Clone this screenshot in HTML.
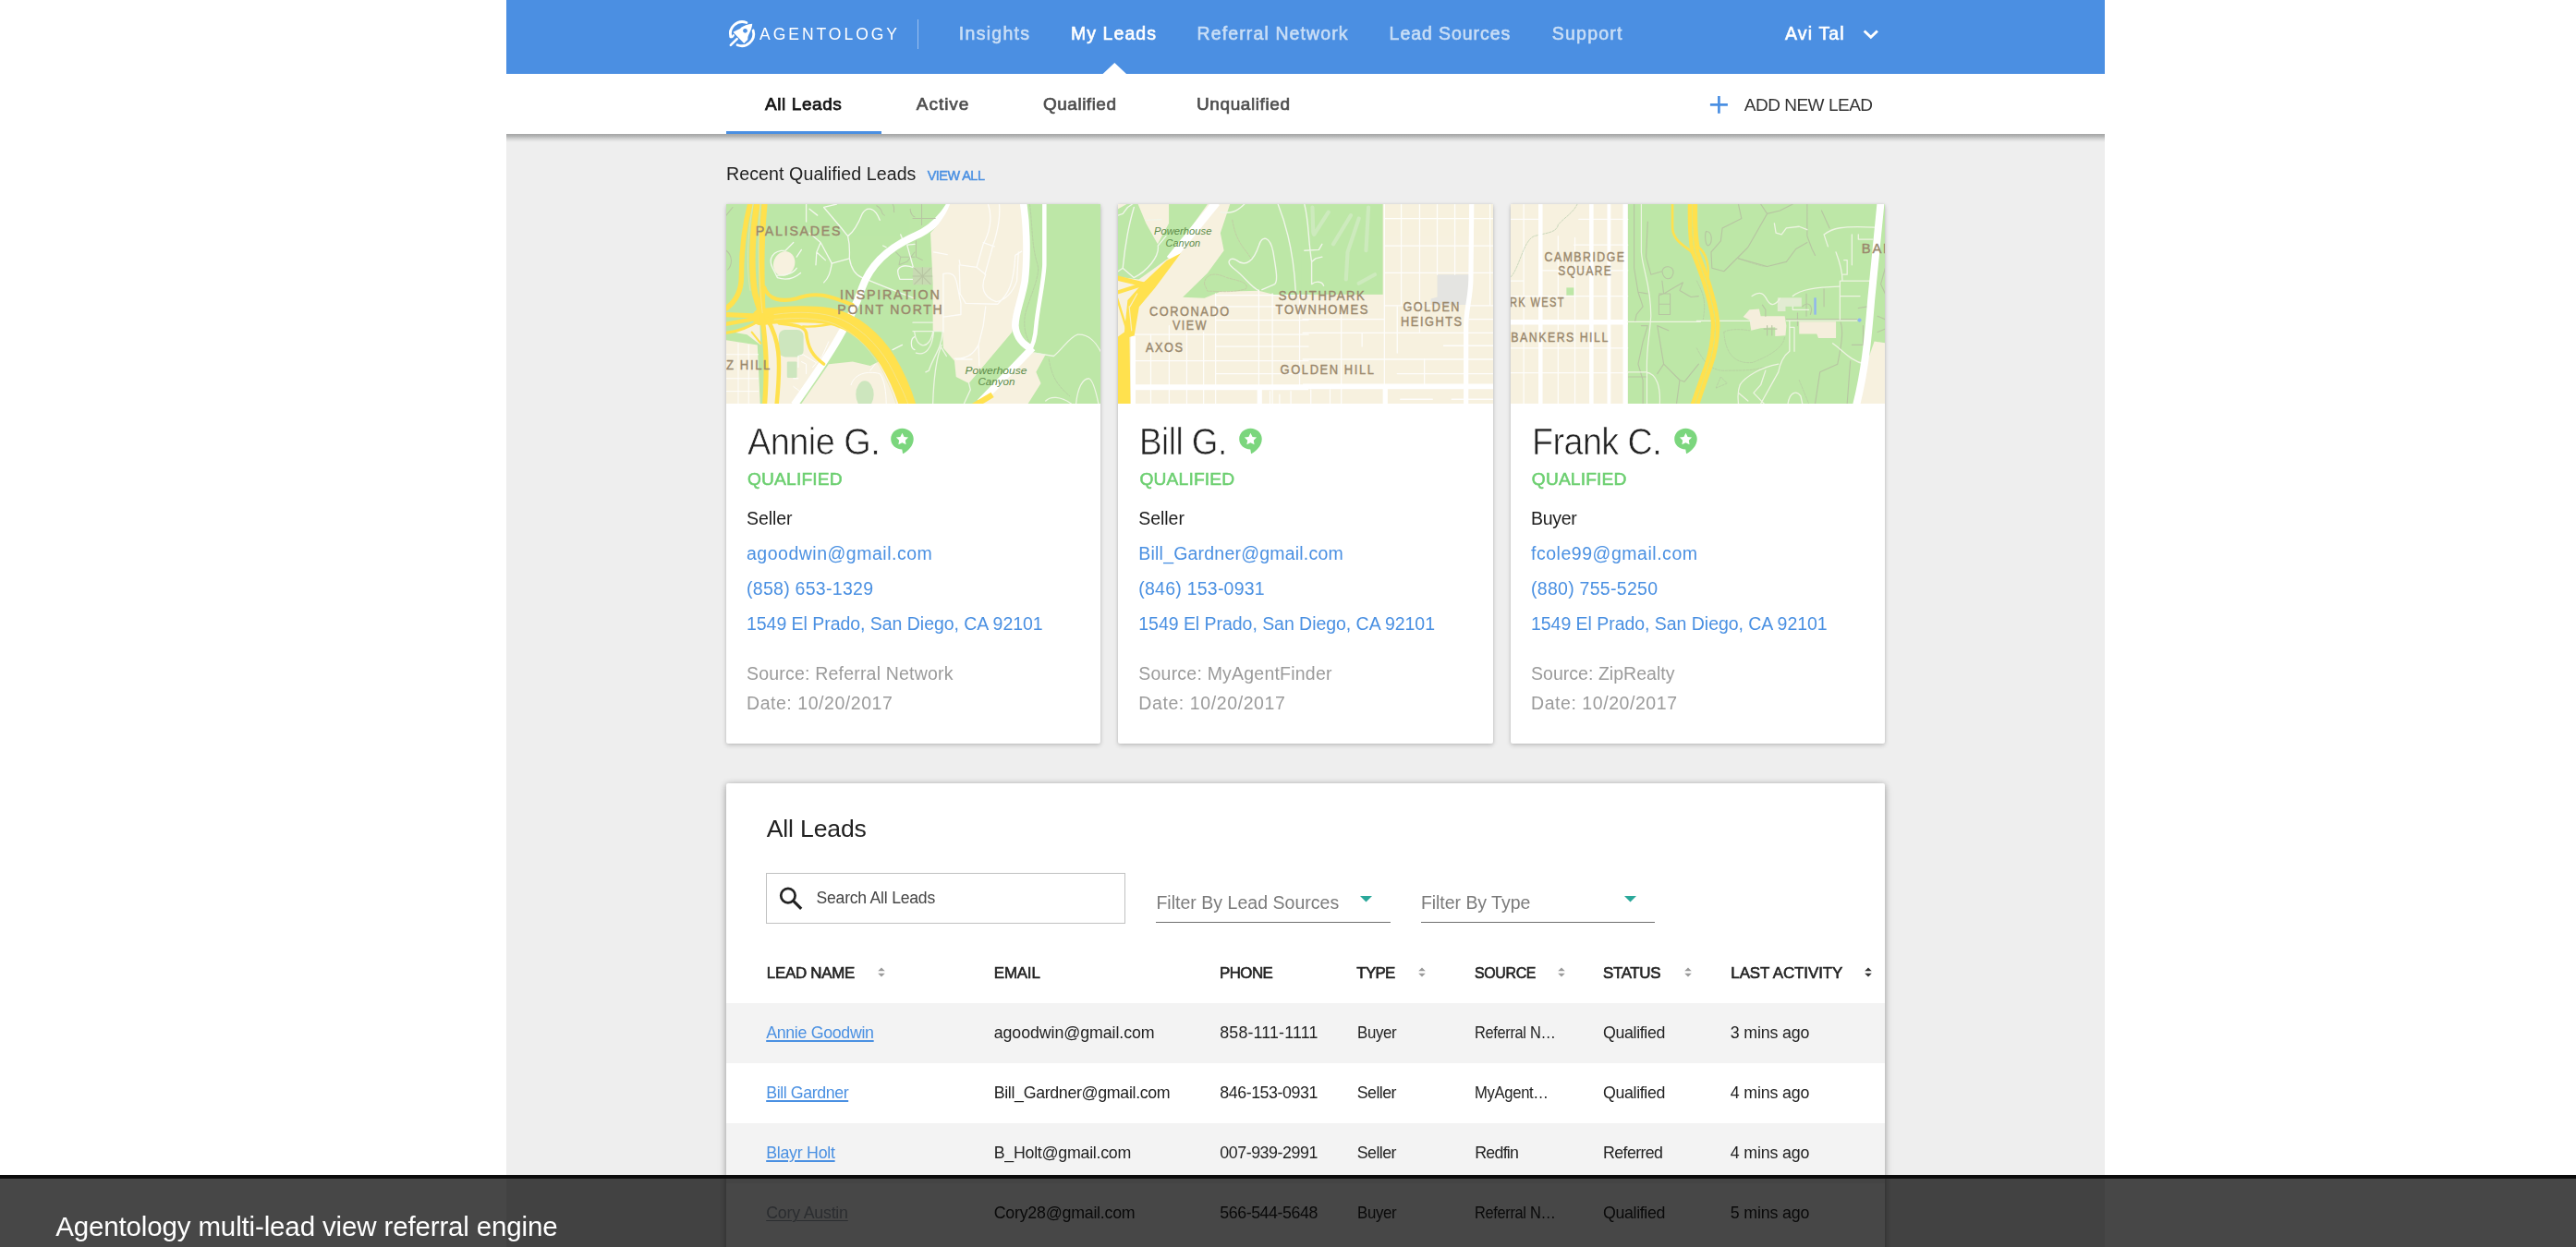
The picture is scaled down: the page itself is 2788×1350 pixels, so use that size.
<!DOCTYPE html>
<html lang="en">
<head>
<meta charset="utf-8">
<title>Agentology – My Leads</title>
<style>
*{box-sizing:border-box;margin:0;padding:0}
html,body{width:2788px;height:1350px;overflow:hidden;background:#fff}
body{position:relative;font-family:"Liberation Sans",sans-serif;color:#212121}
.abs{position:absolute}
.t{position:absolute;white-space:pre;line-height:1;font-family:"Liberation Sans",sans-serif}
#page{position:absolute;left:548px;top:0;width:1730px;height:1350px;background:#eee}
#header{position:absolute;left:548px;top:0;width:1730px;height:80.5px;background:#4b8fe2}
#subnav{position:absolute;left:548px;top:80px;width:1730px;height:65px;background:#fff;}
#subshadow{position:absolute;left:548px;top:145px;width:1730px;height:8.5px;background:linear-gradient(#a4a5a5,#b4b5b5 28%,#cdcece 52%,#e2e2e2 78%,#eee)}
#tabline{position:absolute;left:786px;top:142px;width:167.5px;height:3px;background:#4a8fe2}
.card{position:absolute;top:221px;width:405.4px;height:583.5px;background:#fff;border-radius:0 0 2px 2px;box-shadow:0 2px 5px rgba(0,0,0,.18),0 0 3px rgba(0,0,0,.09);overflow:hidden}
.card svg.map{position:absolute;left:0;top:0;width:405.4px;height:216.3px;display:block}
#tablecard{position:absolute;left:786px;top:848px;width:1254px;height:520px;background:#fff;border-radius:2px;box-shadow:0 1px 6px rgba(0,0,0,.3),0 3px 12px rgba(0,0,0,.1)}
.row{position:absolute;left:786px;width:1254px;height:65px;background:#f3f3f3}
#search{position:absolute;left:828.8px;top:945.2px;width:389.6px;height:54.4px;border:1.6px solid #c0c1c1;background:#fff}
.uline{position:absolute;top:997.8px;height:1.6px;background:#6f6f6f}
#overlay{position:absolute;left:0;top:1272px;width:2788px;height:78px;background:rgba(0,0,0,.72);border-top:4px solid #0b0b0b}
</style>
</head>
<body>
<div id="page"></div>

<!-- ===== top navigation ===== -->
<header id="header"></header>
<svg class="abs" style="left:780px;top:15px" width="50" height="45" viewBox="0 0 1386 1247">
  <g fill="none" stroke="#fff" stroke-width="78" stroke-linecap="round">
    <path d="M775 262 A360 360 0 0 0 300 690"/>
    <path d="M975 500 A360 360 0 0 1 500 935"/>
    <path d="M300 690 Q340 720 385 640" stroke-width="60"/>
    <path d="M490 750 L300 940" stroke-width="72"/>
  </g>
  <path d="M948 298 C800 305 690 360 612 412 L585 445 Q480 490 372 548 L700 888 L810 778 Q800 700 838 628 Q945 430 948 298Z" fill="#fff"/>
  <circle cx="735" cy="508" r="66" fill="#4a8fe2"/>
</svg>
<div class="abs" style="left:992.5px;top:21px;width:1.5px;height:32px;background:rgba(255,255,255,.45)"></div>
<svg class="abs" style="left:1193px;top:68.4px" width="27" height="12.4" viewBox="0 0 27 12.4"><path d="M0 12.4 L13.3 0 L26.6 12.4Z" fill="#fff"/></svg>
<svg class="abs" style="left:2013.5px;top:29px" width="22" height="16" viewBox="0 0 22 16"><path d="M3.7 4.5 L10.8 11.3 L17.9 4.5" fill="none" stroke="#fff" stroke-width="2.9"/></svg>

<!-- ===== sub navigation ===== -->
<nav id="subnav"></nav>
<div id="subshadow"></div>
<div id="tabline"></div>
<svg class="abs" style="left:1850px;top:102.5px" width="21" height="21" viewBox="0 0 21 21"><path d="M10.4 0.9 V19.7 M0.9 10.3 H19.9" stroke="#4a8fe2" stroke-width="2.7" fill="none"/></svg>

<!-- ===== recent qualified lead cards ===== -->
<section class="card" style="left:786px"><svg class="map" viewBox="0 0 405.4 216.3" preserveAspectRatio="none">
<rect width="406" height="217" fill="#bde7a7"/>
<!-- left half, traced at 5.7745x -->
<g transform="scale(0.173175)" fill="none" stroke-linecap="round" stroke-linejoin="round">
  <g fill="#f7f1df" stroke="none">
    <ellipse cx="362" cy="372" rx="66" ry="78" transform="rotate(20 362 372)"/>
    <path d="M0 850 L195 880 L212 1247 L0 1247Z"/>
    <path d="M225 715 L480 735 L700 695 L760 760 L610 1000 L450 1247 L245 1247 L250 900Z"/>
    <path d="M40 800 L210 740 L215 880 L130 815Z"/>
    <path d="M640 1000 L790 985 L900 1010 L1000 960 L1100 1247 L470 1247Z"/>
  </g>
  <g fill="#cde6be" stroke="none">
    <rect x="328" y="785" width="155" height="170" rx="40"/>
    <rect x="380" y="985" width="62" height="100" rx="6"/>
    <ellipse cx="866" cy="1190" rx="56" ry="85"/>
  </g>
  <g stroke="#b7c5a2" stroke-width="6">
    <path d="M0 70 L40 20 M0 290 C40 320 40 380 10 410 M940 10 C990 40 960 60 990 70 M1040 0 C1060 30 1040 40 1050 50 M1150 30 C1150 60 1170 80 1178 80"/>
    <path d="M1060 300 L1090 330 L1080 380 L1130 360 L1178 300 M1090 330 L1178 330" stroke="#b5c9a2"/>
  </g>
  <g stroke="#f4f8ee" stroke-width="7.5">
    <path d="M500 0 L500 110 M520 30 L570 70 M610 20 L690 0 M610 20 L720 150 L760 200 C775 260 770 300 770 340 L660 370 C650 430 640 460 610 490 M760 200 C800 170 830 110 850 60 C880 10 930 20 960 100 M770 340 C780 400 800 440 850 460 L1000 520 L1178 590"/>
    <path d="M560 380 L565 300 L620 350 M565 300 L590 240 L660 370 M590 240 L520 180 M980 260 L1000 270 M1090 190 L1100 215"/>
    <path d="M420 240 L370 290 C290 290 260 340 290 400 L320 460 C380 480 430 460 465 430 M320 445 C370 450 420 430 440 400 M440 330 L470 285"/>
    <path d="M1178 250 L1130 255 L1170 400 M1178 400 C1110 370 1060 390 1075 440 L1085 470 L1178 470 M1178 830 C1150 840 1150 900 1178 910 M1040 910 L1100 880"/>
  </g>
  <g stroke="#fff" stroke-width="5">
    <path d="M75 870 V1247 M140 880 V1247 M0 940 H200 M0 1090 H200 M0 1170 H200"/>
    <path d="M450 950 L480 940 L560 990 M450 950 L450 1020 M470 985 L500 1000 L500 1060 M640 860 L600 950 L540 1020 M420 1140 L460 1170 M420 1090 L450 1090"/>
    <path d="M780 1130 C800 1060 880 1040 960 1060 C990 1100 1000 1180 1000 1247 M900 1040 L930 1000"/>
  </g>
  <!-- arterial -->
  <path d="M1408 -14 C1350 90 1275 160 1178 200 C1010 275 900 380 850 520 C810 640 760 740 700 840 C620 980 520 1120 425 1255" stroke="#fff" stroke-width="46" stroke-linecap="butt"/>
  <!-- freeways -->
  <g stroke="#ffe14e">
    <path d="M150 -5 C110 150 95 300 95 450 C95 550 60 610 -5 655" stroke-width="32"/>
    <path d="M192 -5 C162 200 152 400 180 560 C200 640 215 670 222 690" stroke-width="38"/>
    <path d="M240 -5 C215 250 220 450 228 690" stroke-width="36"/>
    <path d="M225 700 L-5 690" stroke-width="30"/>
    <path d="M225 708 L-5 750" stroke-width="26"/>
    <path d="M225 716 C150 765 80 800 -5 805" stroke-width="18"/>
    <path d="M160 800 L215 870" stroke-width="12"/>
    <path d="M238 520 C260 600 350 612 440 590 C560 545 640 570 790 630" stroke-width="24"/>
    <path d="M215 706 C350 690 500 680 640 700 C800 730 930 850 1010 980 C1070 1080 1110 1180 1135 1262" stroke-width="104"/>
    <path d="M225 700 C240 850 262 950 240 1255" stroke-width="30"/>
    <path d="M258 720 C330 850 345 950 315 1255" stroke-width="26"/>
    <path d="M330 745 C420 755 490 760 500 805 C510 900 540 950 610 1000" stroke-width="20"/>
    <path d="M480 765 C560 770 640 755 720 735" stroke-width="14"/>
  </g>
  <g stroke="#f2e9a6" stroke-width="5" opacity=".75">
    <path d="M300 690 C450 668 600 672 720 720 C870 790 980 920 1045 1050 C1090 1140 1120 1200 1140 1260"/>
    <path d="M300 722 C450 706 580 712 680 750 C820 810 920 930 985 1060 C1025 1150 1050 1200 1065 1260"/>
    <path d="M214 0 C192 250 205 480 226 680"/>
    <path d="M168 0 C130 200 125 400 150 540"/>
  </g>
</g>
<!-- right half -->
<g transform="translate(202 0) scale(0.173175)" fill="none" stroke-linecap="round" stroke-linejoin="round">
  <g fill="#f7f1df" stroke="none">
    <path d="M110 180 C170 120 210 60 232 0 L690 0 L705 300 L695 500 L635 700 L620 800 L350 1120 L270 1080 L260 980 L190 900 L185 800 L125 790 L125 500Z"/>
    <path d="M720 920 L830 940 L770 1050 L800 1120 L720 1247 L420 1247Z"/>
  </g>
  <rect x="0" y="395" width="120" height="108" fill="#c7dab2"/>
  <g stroke="#b7c5a2" stroke-width="6">
    <path d="M55 0 V130 M0 90 H140 M20 230 V330 L60 350 M10 400 L110 500 M110 400 L10 500 M60 395 V500 M0 450 H120"/>
  </g>
  <g stroke="#fff" stroke-width="7.5" opacity=".8">
    <path d="M470 0 C500 80 480 180 440 250 L400 390 M540 0 C550 100 520 200 500 260 L450 440 M440 240 L510 265 M290 350 L295 380 L400 395 L455 440 C420 520 440 580 520 610 M130 300 L215 315"/>
    <path d="M190 435 L190 800 M190 435 C260 420 270 460 280 520 L300 620 L300 690 L190 705 M290 380 L295 560 L330 620 L530 625 C600 560 630 500 640 320 L680 295 M660 300 L650 480 C620 560 580 600 520 610 M455 640 L440 760 L410 880 C380 940 330 970 260 965 M410 880 L415 1010 M270 970 L370 970"/>
  </g>
  <g stroke="#eef5e4" stroke-width="7.5">
    <path d="M0 740 L125 740 M0 795 L180 795 M10 800 C20 900 100 920 125 800 M20 930 C80 950 120 900 130 800 M185 800 C180 900 130 950 100 1040 L80 1050 M180 900 L210 950 M180 880 C150 950 130 1100 125 1247 M350 1120 L360 1160 L320 1247"/>
    <path d="M760 930 L880 950 C940 900 980 830 1030 815 C1100 810 1150 870 1178 930 M830 1230 C860 1200 920 1200 990 1247 M1020 1247 C1030 1150 1060 1090 1100 1090 C1130 1100 1150 1200 1160 1247"/>
  </g>
  <g stroke="#b3c39f" stroke-width="3.5" stroke-dasharray="16 8">
    <path d="M730 0 C750 150 740 250 780 380 C800 450 720 600 700 700 C690 780 710 830 730 870"/>
    <path d="M850 970 C870 1080 900 1130 980 1200"/>
  </g>
  <g stroke="#fff" stroke-linecap="butt">
    <path d="M690 -10 C715 150 715 350 700 480 C680 600 640 680 640 760 C645 830 690 880 745 905" stroke-width="44"/>
    <path d="M822 -10 L822 380 C815 500 780 650 770 760 C765 840 750 890 722 925" stroke-width="26"/>
    <path d="M748 898 L420 1238" stroke-width="44"/>
  </g>
  <path d="M497 1192 L380 1262" stroke="#ffe14e" stroke-width="36" stroke-linecap="butt"/>
</g>
<g font-family="Liberation Sans, sans-serif" font-weight="400" fill="#9a886c" stroke="#9a886c" stroke-width=".4" font-size="13.9" letter-spacing="1.7">
  <text x="31.7" y="34.1" textLength="93.6" lengthAdjust="spacingAndGlyphs">PALISADES</text>
  <text x="122.9" y="103.4" textLength="109.6" lengthAdjust="spacingAndGlyphs">INSPIRATION</text>
  <text x="120.3" y="118.8" textLength="115.2" lengthAdjust="spacingAndGlyphs">POINT NORTH</text>
  <text x="0" y="179.5" textLength="49" lengthAdjust="spacingAndGlyphs">Z HILL</text>
</g>
<g font-family="Liberation Sans, sans-serif" font-style="italic" fill="#5d8c4a" font-size="11.6" text-anchor="middle">
  <text x="292" y="183.6" textLength="67" lengthAdjust="spacingAndGlyphs">Powerhouse</text>
  <text x="292.5" y="196.2" textLength="40" lengthAdjust="spacingAndGlyphs">Canyon</text>
</g>
</svg>
</section>
<section class="card" style="left:1210.2px"><svg class="map" viewBox="0 0 405.4 216.3" preserveAspectRatio="none">
<rect width="406" height="217" fill="#f7f1df"/>
<!-- left half -->
<g transform="scale(0.173175)" fill="none" stroke-linecap="round" stroke-linejoin="round">
  <g fill="#bde7a7" stroke="none">
    <path d="M0 0 L560 0 L320 335 L130 470 L0 455Z"/>
    <path d="M700 0 L1190 0 L1190 562 L1000 572 L880 542 L640 547 L540 587 L405 582 L560 430 L662 290 L640 180Z"/>
  </g>
  <path d="M125 0 L318 0 L318 120 L248 250 L175 120Z M0 30 L55 0 L0 0Z" fill="#f7f1df"/>
  <g stroke="#f1f6ea" stroke-width="8">
    <path d="M0 70 L30 60 L60 20 L90 0 M100 20 C60 150 40 300 30 400 L100 460 C180 420 260 330 250 260 L300 200 M30 400 L0 420 M180 100 L270 95"/>
    <path d="M1000 0 C1060 150 1100 350 1110 540 M790 0 C740 50 700 60 640 50 M880 540 C830 520 800 460 720 400 C670 360 700 330 740 350 C800 400 850 350 880 260 C900 190 950 200 970 300 C990 420 1000 480 980 500 L900 535 M1178 20 C1150 60 1178 100 1178 100"/>
  </g>
  <g stroke="#c3bca2" stroke-width="3.5" stroke-dasharray="14 8">
    <path d="M715 100 C740 250 800 280 830 340"/>
    <path d="M540 500 C540 440 600 420 680 460 C760 480 820 490 800 530 C700 560 600 540 560 545Z"/>
  </g>
  <g stroke="#fff" stroke-width="7.5" opacity=".88">
    <path d="M610 570 H1190 M610 640 H1190 M610 725 H1190 M100 815 H1190 M610 890 H1190 M100 980 H1190 M610 1060 H1190"/>
    <path d="M205 815 V1247 M320 760 V1247 M430 800 V1247 M535 800 V1247 M610 560 V1247 M880 540 V1160 M965 560 V1247 M1135 560 V1150 M950 1170 V1247 M1010 1190 V1247 M1080 1170 V1247"/>
  </g>
  <g stroke="#fff" stroke-linecap="butt">
    <path d="M615 -10 L325 345" stroke-width="52"/>
    <path d="M95 825 V1260" stroke-width="30"/>
    <path d="M80 1145 H1190" stroke-width="34"/>
    <path d="M885 1150 V1260" stroke-width="30"/>
  </g>
  <g fill="#ffe14e" stroke="none">
    <path d="M305 352 L392 308 L232 522 L132 642 L102 822 L72 832 L78 1260 L-5 1260 L-5 832 L40 800 L60 600 L150 500Z"/>
  </g>
  <g stroke="#ffe14e">
    <path d="M-5 462 L150 500" stroke-width="30"/>
    <path d="M-5 552 L190 490" stroke-width="24"/>
    <path d="M-5 590 L60 800" stroke-width="14"/>
  </g>
  <g stroke="#f7f1df" stroke-width="7" opacity=".8"><path d="M70 640 L85 790 M120 560 L75 640"/></g>
</g>
<!-- right half -->
<g transform="translate(201.8 0) scale(0.173175)" fill="none" stroke-linecap="round" stroke-linejoin="round">
  <rect x="-20" y="-5" width="510" height="570" fill="#bde7a7"/>
  <g stroke="#cdeabd" stroke-width="24">
    <path d="M150 50 L60 190 M290 70 L180 250 M340 90 L270 300 L260 470 M400 20 L385 290 M440 440 L340 495 M50 20 L55 180"/>
  </g>
  <g stroke="#f1f6ea" stroke-width="8">
    <path d="M0 0 C30 120 20 200 45 360 V500 M0 290 L90 285 L110 250 M45 360 L70 340 L110 330 M45 500 C70 480 110 480 120 510"/>
  </g>
  <path d="M830 440 L1030 440 L1020 630 L790 630 L790 592 L830 580Z" fill="#e4e4e1"/>
  <g stroke="#fff" stroke-width="7.5" opacity=".88">
    <path d="M500 90 H1190 M500 260 H1190 M500 430 H1190 M500 635 H790 M1030 635 H1190 M-10 720 H500 M1030 720 H1190 M-10 805 H1190 M870 885 H1190 M-10 970 H1190 M580 1060 H1190"/>
    <path d="M500 -5 V1160 M605 -5 V630 M720 -5 V800 M830 -5 V440 M940 -5 V440 M1160 -5 V630 M580 640 V930 M750 970 V1140 M230 680 V1247 M360 805 V890 M160 1160 V1247 M40 1160 V1247 M600 1220 H800 M920 1220 H1190"/>
  </g>
  <g stroke="#fff" stroke-linecap="butt">
    <path d="M1045 -10 L1040 480 C1035 600 1010 660 1010 760 V1260" stroke-width="30"/>
    <path d="M-10 1140 H1190" stroke-width="34"/>
    <path d="M505 1130 V1260" stroke-width="30"/>
  </g>
</g>
<g font-family="Liberation Sans, sans-serif" font-weight="400" fill="#9a886c" stroke="#9a886c" stroke-width=".4" font-size="13.9" letter-spacing="1.7">
  <text x="33.9" y="120.8" textLength="87.8" lengthAdjust="spacingAndGlyphs">CORONADO</text>
  <text x="59" y="136.4" textLength="38" lengthAdjust="spacingAndGlyphs">VIEW</text>
  <text x="29.9" y="160" textLength="41.7" lengthAdjust="spacingAndGlyphs">AXOS</text>
  <text x="173.8" y="103.8" textLength="94.6" lengthAdjust="spacingAndGlyphs">SOUTHPARK</text>
  <text x="170.6" y="119.4" textLength="101.4" lengthAdjust="spacingAndGlyphs">TOWNHOMES</text>
  <text x="308.5" y="115.8" textLength="62.5" lengthAdjust="spacingAndGlyphs">GOLDEN</text>
  <text x="306.1" y="131.8" textLength="67.6" lengthAdjust="spacingAndGlyphs">HEIGHTS</text>
  <text x="175.6" y="184.5" textLength="102.9" lengthAdjust="spacingAndGlyphs">GOLDEN HILL</text>
</g>
<g font-family="Liberation Sans, sans-serif" font-style="italic" fill="#5d8c4a" font-size="11.6">
  <text x="39" y="33" textLength="62.5" lengthAdjust="spacingAndGlyphs">Powerhouse</text>
  <text x="51.6" y="45.6" textLength="37.6" lengthAdjust="spacingAndGlyphs">Canyon</text>
</g>
</svg>
</section>
<section class="card" style="left:1634.6px"><svg class="map" viewBox="0 0 405.4 216.3" preserveAspectRatio="none">
<rect width="406" height="217" fill="#bde7a7"/>
<!-- left half -->
<g transform="translate(-0.6 0) scale(0.173175)" fill="none" stroke-linecap="round" stroke-linejoin="round">
  <rect x="-10" y="-10" width="745" height="1270" fill="#f7f1df"/>
  <rect x="352" y="522" width="46" height="48" fill="#bde7a7"/>
  <g stroke="#fff" stroke-width="7.5" opacity=".85">
    <path d="M85 -5 V1260 M300 200 V1260 M405 210 V1260 M0 95 H190 M430 95 H735 M400 255 H735 M190 415 H735 M0 575 H735 M0 900 H735 M0 1055 H735 M0 480 H85"/>
  </g>
  <path d="M420 0 C390 60 330 90 300 130 C290 180 220 180 150 200 C80 230 60 400 0 460" stroke="#a9c5a2" stroke-width="3.5" stroke-dasharray="14 8"/>
  <g stroke="#fff" stroke-linecap="butt">
    <path d="M190 -10 V1260" stroke-width="26"/>
    <path d="M508 -10 V1260" stroke-width="26"/>
    <path d="M618 -10 V1260" stroke-width="22"/>
    <path d="M720 -10 V1260" stroke-width="30"/>
    <path d="M-10 738 H735" stroke-width="32"/>
  </g>
  <g stroke="#b7c5a2" stroke-width="6.5">
    <path d="M775 0 V400 L800 550 L860 560 M800 550 L830 640 L790 690 L780 735 M860 110 L850 330 L880 440 L950 420 C960 380 1020 380 1020 430 C1010 480 960 480 950 420 M950 480 L960 560 L930 570 V690 H1000 V560 H930 M930 625 H1000 M960 560 L1080 490 L1060 540 L1130 580 L1178 575 M820 760 L860 760 L830 860 L800 1000 L830 1100 V1247 M920 760 L990 790 M920 760 L960 1000 L920 1060 M960 1000 L1060 1100 L1090 1110 L1178 1000 M1060 1100 L1040 1247 M740 1080 H850"/>
  </g>
  <g stroke="#eef4e2" stroke-width="7">
    <path d="M820 0 L820 300 C830 420 880 500 880 700 C870 850 850 900 855 1050 V1247 M735 735 H1190 M735 1050 H850 C920 1060 940 1150 935 1247"/>
  </g>
</g>
<!-- right half -->
<g transform="translate(201.4 0) scale(0.173175)" fill="none" stroke-linecap="round" stroke-linejoin="round">
  <path d="M1110 858 L1190 870 L1190 1260 L980 1260 L1060 1000Z" fill="#f7f1df"/>
  <g fill="#f5eedc">
    <path d="M290 705 L330 660 L390 655 L400 700 L550 700 L560 760 L555 822 L490 826 L490 770 L400 775 L340 790 L330 725Z"/>
    <path d="M640 735 L870 735 L870 838 L760 838 L750 812 L640 812Z"/>
  </g>
  <rect x="505" y="585" width="150" height="55" fill="#e2ecd2"/><rect x="505" y="630" width="50" height="40" fill="#e2ecd2"/>
  <rect x="733" y="585" width="14" height="106" fill="#8fb5ef"/><circle cx="1017" cy="725" r="12" fill="#8fb5ef"/>
  <g stroke="#b7c5a2" stroke-width="6.5">
    <path d="M260 0 L280 90 L160 150 L150 230 L90 300 L95 400 L170 420 L320 270 L440 60 L400 0 M440 60 L520 40 L600 0 M690 0 V200 L720 280 L740 320 M690 240 L620 280 L560 360 L440 390 L260 340 M780 40 L830 150 M60 170 C100 170 100 250 70 260 C50 250 50 180 60 170 M900 740 C920 800 900 900 880 1000 L770 1050 L740 1247 M960 980 L940 1247 M1178 400 L1150 500 L1178 560 M1010 650 L1070 640 M1130 700 L1178 720 M1130 800 L1178 780 M560 720 H1000 M630 680 V760 M685 560 V700 M795 530 V640 M1040 760 V880 H970 M410 630 L430 660 V700 M440 760 V820 M470 760 V820 M420 780 H500 M660 640 C700 600 730 640 710 690"/>
  </g>
  <g stroke="#b4c5a0" stroke-width="3.5" stroke-dasharray="14 8">
    <path d="M260 340 C350 370 400 390 440 390 M170 800 C180 950 250 1000 350 990 C450 950 540 900 550 830 M170 800 C200 780 270 780 330 790 M0 900 C50 1000 100 1050 200 1040 C300 1040 350 1040 420 1020 M0 480 C40 560 60 600 40 720 M640 1100 L700 1247 M120 1150 L150 1080 L190 1120Z"/>
  </g>
  <g stroke="#eef4e2" stroke-width="7.5">
    <path d="M0 730 H340 M560 728 H1000"/>
    <path d="M795 190 C850 150 900 135 1110 145 M795 190 L820 265 M900 480 H1090 M895 480 V720 M900 575 H1020 M345 575 C400 540 420 560 440 600 C470 650 500 620 520 590 M600 575 C650 530 750 520 890 515 M870 300 C900 380 910 420 910 475 M920 350 H940 V440 H915 M1010 190 V220 H1100 M485 120 L495 180 L530 190 L560 150 L640 140 L690 160 M970 190 V380 M600 640 V660 H700"/>
    <path d="M580 730 V920 C540 950 520 1000 510 1050 L400 1247 M610 770 V920 M580 770 H610 M850 870 C920 920 960 980 1050 1000 M510 1000 C400 1020 300 1080 270 1130 C250 1180 260 1220 260 1247 M430 1040 L400 1130 L355 1180 L420 1247 M260 1180 L320 1230 M570 1247 C580 1180 620 1160 650 1200 L660 1247"/>
  </g>
  <path d="M1150 -10 C1130 200 1110 400 1090 600 C1070 850 1050 1050 995 1265" stroke="#fff" stroke-width="46" stroke-linecap="butt"/>
  <g stroke="#ffe14e">
    <path d="M-152 -10 V150 C-146 230 -76 260 -42 290 C-20 310 0 330 20 370" stroke-width="15"/>
    <path d="M-43 -10 C-45 120 -43 230 -25 300 C5 380 30 440 51 510 C75 600 103 680 102 760 C100 860 80 950 55 1020 C25 1100 -5 1190 -30 1265" stroke-width="25"/>
    <path d="M-13 -10 C-15 120 -13 230 5 300 C35 380 60 440 81 510 C105 600 133 680 132 760 C130 860 110 950 85 1020 C55 1100 25 1190 0 1265" stroke-width="25"/>
    <path d="M-2 -10 C-4 100 -2 200 12 270 C40 290 70 340 72 420 C72 460 68 480 66 500" stroke-width="14"/>
    <path d="M60 1040 C30 1120 0 1200 -40 1265" stroke-width="16"/>
  </g>
  <path d="M-28 -10 C-30 120 -28 230 -10 300 C20 380 45 440 66 510 C90 600 118 680 117 760 C115 860 95 950 70 1020 C40 1100 10 1190 -15 1265" stroke="#e6e56f" stroke-width="6"/>
</g>
<g font-family="Liberation Sans, sans-serif" font-weight="400" fill="#9a886c" stroke="#9a886c" stroke-width=".4" font-size="13.9" letter-spacing="1.7">
  <text x="36.6" y="61.6" textLength="87.8" lengthAdjust="spacingAndGlyphs">CAMBRIDGE</text>
  <text x="51.3" y="77.1" textLength="58.9" lengthAdjust="spacingAndGlyphs">SQUARE</text>
  <text x="-1" y="110.9" textLength="60" lengthAdjust="spacingAndGlyphs">RK WEST</text>
  <text x="0.3" y="148.7" textLength="106.5" lengthAdjust="spacingAndGlyphs">BANKERS HILL</text>
  <text x="379.8" y="52.9" textLength="45" lengthAdjust="spacingAndGlyphs">BALB</text>
</g>
</svg>
</section>

<svg width="0" height="0" style="position:absolute"><defs>
<symbol id="badge" viewBox="0 0 1247 1247">
  <path d="M595 245 C405 245 255 385 255 560 C255 735 400 870 590 872 L612 1005 C760 930 935 770 935 560 C935 385 785 245 595 245Z" fill="#7bd67d"/>
  <path d="M595 383 L653 496 L778 516 L688 605 L708 730 L595 673 L482 730 L502 605 L412 516 L537 496Z" fill="#fff"/>
</symbol>
<symbol id="sort" viewBox="0 0 8 11"><path d="M0.2 4.3 L4 0.4 L7.8 4.3Z M0.2 6.7 L4 10.6 L7.8 6.7Z"/></symbol>
<symbol id="dd" viewBox="0 0 13 7"><path d="M0 0 H13 L6.5 6.6Z" fill="#2aa89a"/></symbol>
</defs></svg>
<svg class="abs" style="left:955px;top:455px" width="45" height="45"><use href="#badge"/></svg>
<svg class="abs" style="left:1332px;top:455px" width="45" height="45"><use href="#badge"/></svg>
<svg class="abs" style="left:1803.4px;top:455px" width="45" height="45"><use href="#badge"/></svg>

<!-- ===== all leads table ===== -->
<section id="tablecard"></section>
<div class="row" style="top:1086px"></div>
<div class="row" style="top:1216px"></div>
<div id="search"></div>
<svg class="abs" style="left:842px;top:959px" width="28" height="28" viewBox="0 0 28 28"><circle cx="10.9" cy="10.6" r="7.7" fill="none" stroke="#222" stroke-width="2.7"/><path d="M16.4 16.2 L25.2 24.8" stroke="#222" stroke-width="3.2"/></svg>
<div class="uline" style="left:1251.4px;width:253.3px"></div>
<div class="uline" style="left:1537.9px;width:253.3px"></div>
<svg class="abs" style="left:1471.8px;top:970.2px" width="13" height="7"><use href="#dd"/></svg>
<svg class="abs" style="left:1758px;top:970.2px" width="13" height="7"><use href="#dd"/></svg>
<svg class="abs" style="left:949.6px;top:1047.3px;fill:#9a9a9a" width="8" height="11"><use href="#sort"/></svg>
<svg class="abs" style="left:1534.8px;top:1047.3px;fill:#9a9a9a" width="8" height="11"><use href="#sort"/></svg>
<svg class="abs" style="left:1686.4px;top:1047.3px;fill:#9a9a9a" width="8" height="11"><use href="#sort"/></svg>
<svg class="abs" style="left:1822.7px;top:1047.3px;fill:#9a9a9a" width="8" height="11"><use href="#sort"/></svg>
<svg class="abs" style="left:2018.4px;top:1047.3px;fill:#333" width="8" height="11"><use href="#sort"/></svg>

<!-- ===== text ===== -->
<div id="txt" style="position:absolute;left:0;top:0;width:2788px;height:1350px;will-change:transform">
<span class="t" style="left:822.0px;top:29px;font-size:17.5px;font-weight:400;color:#fff;letter-spacing:2.976px;">AGENTOLOGY</span>
<span class="t" style="left:1037.8px;top:27px;font-size:19.5px;font-weight:400;color:#c9def6;letter-spacing:1.285px;-webkit-text-stroke:0.6px #c9def6;">Insights</span>
<span class="t" style="left:1159.0px;top:27px;font-size:19.5px;font-weight:400;color:#fff;letter-spacing:1.065px;-webkit-text-stroke:0.6px #fff;">My Leads</span>
<span class="t" style="left:1295.6px;top:27px;font-size:19.5px;font-weight:400;color:#c9def6;letter-spacing:1.114px;-webkit-text-stroke:0.6px #c9def6;">Referral Network</span>
<span class="t" style="left:1503.6px;top:27px;font-size:19.5px;font-weight:400;color:#c9def6;letter-spacing:0.941px;-webkit-text-stroke:0.6px #c9def6;">Lead Sources</span>
<span class="t" style="left:1679.7px;top:27px;font-size:19.5px;font-weight:400;color:#c9def6;letter-spacing:1.248px;-webkit-text-stroke:0.6px #c9def6;">Support</span>
<span class="t" style="left:1932.0px;top:27px;font-size:19.5px;font-weight:400;color:#fff;letter-spacing:1.144px;-webkit-text-stroke:0.6px #fff;">Avi Tal</span>
<span class="t" style="left:828.1px;top:103px;font-size:19px;font-weight:400;color:#141414;letter-spacing:0.566px;-webkit-text-stroke:0.75px #141414;">All Leads</span>
<span class="t" style="left:991.8px;top:103px;font-size:19px;font-weight:400;color:#4d4d4d;letter-spacing:0.970px;-webkit-text-stroke:0.65px #4d4d4d;">Active</span>
<span class="t" style="left:1129.0px;top:103px;font-size:19px;font-weight:400;color:#4d4d4d;letter-spacing:0.500px;-webkit-text-stroke:0.65px #4d4d4d;">Qualified</span>
<span class="t" style="left:1295.0px;top:103px;font-size:19px;font-weight:400;color:#4d4d4d;letter-spacing:0.592px;-webkit-text-stroke:0.65px #4d4d4d;">Unqualified</span>
<span class="t" style="left:1887.7px;top:104px;font-size:19px;font-weight:400;color:#333;letter-spacing:-0.476px;">ADD NEW LEAD</span>
<span class="t" style="left:786.0px;top:179px;font-size:19.6px;font-weight:400;color:#212121;letter-spacing:0.082px;">Recent Qualified Leads</span>
<span class="t" style="left:1003.7px;top:183px;font-size:14.4px;font-weight:400;color:#4a90e2;letter-spacing:-0.485px;-webkit-text-stroke:0.5px #4a90e2;">VIEW ALL</span>
<span class="t" style="left:808.8px;top:458px;font-size:41.2px;font-weight:400;color:#222;letter-spacing:-0.600px;-webkit-text-stroke:0.7px #fff;transform:scaleX(0.9208);transform-origin:0 50%;">Annie G.</span>
<span class="t" style="left:809.0px;top:509px;font-size:19.2px;font-weight:400;color:#6ccf70;letter-spacing:0.163px;-webkit-text-stroke:0.55px #6ccf70;">QUALIFIED</span>
<span class="t" style="left:808.0px;top:552px;font-size:19.5px;font-weight:400;color:#1c1c1c;letter-spacing:-0.092px;">Seller</span>
<span class="t" style="left:808.0px;top:590px;font-size:19.5px;font-weight:400;color:#4a90e2;letter-spacing:0.509px;">agoodwin@gmail.com</span>
<span class="t" style="left:808.0px;top:628px;font-size:19.5px;font-weight:400;color:#4a90e2;letter-spacing:0.280px;">(858) 653-1329</span>
<span class="t" style="left:808.0px;top:666px;font-size:19.5px;font-weight:400;color:#4a90e2;letter-spacing:-0.039px;">1549 El Prado, San Diego, CA 92101</span>
<span class="t" style="left:808.0px;top:720px;font-size:19.5px;font-weight:400;color:#9b9b9b;letter-spacing:0.199px;">Source: Referral Network</span>
<span class="t" style="left:808.0px;top:752px;font-size:19.5px;font-weight:400;color:#9b9b9b;letter-spacing:0.545px;">Date: 10/20/2017</span>
<span class="t" style="left:1233.1px;top:458px;font-size:41.2px;font-weight:400;color:#222;letter-spacing:-0.600px;-webkit-text-stroke:0.7px #fff;transform:scaleX(0.8969);transform-origin:0 50%;">Bill G.</span>
<span class="t" style="left:1233.5px;top:509px;font-size:19.2px;font-weight:400;color:#6ccf70;letter-spacing:0.163px;-webkit-text-stroke:0.55px #6ccf70;">QUALIFIED</span>
<span class="t" style="left:1232.3px;top:552px;font-size:19.5px;font-weight:400;color:#1c1c1c;letter-spacing:-0.052px;">Seller</span>
<span class="t" style="left:1232.3px;top:590px;font-size:19.5px;font-weight:400;color:#4a90e2;letter-spacing:0.207px;">Bill_Gardner@gmail.com</span>
<span class="t" style="left:1232.3px;top:628px;font-size:19.5px;font-weight:400;color:#4a90e2;letter-spacing:0.234px;">(846) 153-0931</span>
<span class="t" style="left:1232.3px;top:666px;font-size:19.5px;font-weight:400;color:#4a90e2;letter-spacing:-0.039px;">1549 El Prado, San Diego, CA 92101</span>
<span class="t" style="left:1232.3px;top:720px;font-size:19.5px;font-weight:400;color:#9b9b9b;letter-spacing:0.217px;">Source: MyAgentFinder</span>
<span class="t" style="left:1232.3px;top:752px;font-size:19.5px;font-weight:400;color:#9b9b9b;letter-spacing:0.592px;">Date: 10/20/2017</span>
<span class="t" style="left:1657.8px;top:458px;font-size:41.2px;font-weight:400;color:#222;letter-spacing:-0.600px;-webkit-text-stroke:0.7px #fff;transform:scaleX(0.9159);transform-origin:0 50%;">Frank C.</span>
<span class="t" style="left:1657.8px;top:509px;font-size:19.2px;font-weight:400;color:#6ccf70;letter-spacing:0.163px;-webkit-text-stroke:0.55px #6ccf70;">QUALIFIED</span>
<span class="t" style="left:1657.0px;top:552px;font-size:19.5px;font-weight:400;color:#1c1c1c;letter-spacing:-0.313px;">Buyer</span>
<span class="t" style="left:1657.0px;top:590px;font-size:19.5px;font-weight:400;color:#4a90e2;letter-spacing:0.529px;">fcole99@gmail.com</span>
<span class="t" style="left:1657.0px;top:628px;font-size:19.5px;font-weight:400;color:#4a90e2;letter-spacing:0.280px;">(880) 755-5250</span>
<span class="t" style="left:1657.0px;top:666px;font-size:19.5px;font-weight:400;color:#4a90e2;letter-spacing:-0.039px;">1549 El Prado, San Diego, CA 92101</span>
<span class="t" style="left:1657.0px;top:720px;font-size:19.5px;font-weight:400;color:#9b9b9b;letter-spacing:0.032px;">Source: ZipRealty</span>
<span class="t" style="left:1657.0px;top:752px;font-size:19.5px;font-weight:400;color:#9b9b9b;letter-spacing:0.558px;">Date: 10/20/2017</span>
<span class="t" style="left:829.8px;top:884px;font-size:26.6px;font-weight:400;color:#212121;letter-spacing:-0.176px;">All Leads</span>
<span class="t" style="left:883.5px;top:964px;font-size:17.6px;font-weight:400;color:#444;letter-spacing:-0.223px;">Search All Leads</span>
<span class="t" style="left:1251.4px;top:968px;font-size:19.5px;font-weight:400;color:#7b7b7b;letter-spacing:0.025px;">Filter By Lead Sources</span>
<span class="t" style="left:1537.9px;top:968px;font-size:19.5px;font-weight:400;color:#7b7b7b;letter-spacing:-0.035px;">Filter By Type</span>
<span class="t" style="left:829.8px;top:1046px;font-size:16.9px;font-weight:400;color:#222;letter-spacing:-0.278px;-webkit-text-stroke:0.6px #222;">LEAD NAME</span>
<span class="t" style="left:1075.8px;top:1046px;font-size:16.9px;font-weight:400;color:#222;letter-spacing:-0.176px;-webkit-text-stroke:0.6px #222;">EMAIL</span>
<span class="t" style="left:1319.9px;top:1046px;font-size:16.9px;font-weight:400;color:#222;letter-spacing:-0.520px;-webkit-text-stroke:0.6px #222;">PHONE</span>
<span class="t" style="left:1468.3px;top:1046px;font-size:16.9px;font-weight:400;color:#222;letter-spacing:-0.708px;-webkit-text-stroke:0.6px #222;">TYPE</span>
<span class="t" style="left:1595.5px;top:1046px;font-size:16.9px;font-weight:400;color:#222;letter-spacing:-0.350px;-webkit-text-stroke:0.6px #222;transform:scaleX(0.9416);transform-origin:0 50%;">SOURCE</span>
<span class="t" style="left:1735.0px;top:1046px;font-size:16.9px;font-weight:400;color:#222;letter-spacing:-0.325px;-webkit-text-stroke:0.6px #222;">STATUS</span>
<span class="t" style="left:1873.3px;top:1046px;font-size:16.9px;font-weight:400;color:#222;letter-spacing:-0.060px;-webkit-text-stroke:0.6px #222;">LAST ACTIVITY</span>
<span class="t" style="left:829.2px;top:1110px;font-size:17.8px;font-weight:400;color:#4a90e2;letter-spacing:-0.317px;text-decoration:underline;text-underline-offset:1.6px;text-decoration-thickness:1.8px;">Annie Goodwin</span>
<span class="t" style="left:1075.7px;top:1110px;font-size:17.8px;font-weight:400;color:#222;letter-spacing:-0.071px;">agoodwin@gmail.com</span>
<span class="t" style="left:1320.3px;top:1110px;font-size:17.8px;font-weight:400;color:#222;letter-spacing:0.169px;">858-111-1111</span>
<span class="t" style="left:1468.8px;top:1110px;font-size:17.8px;font-weight:400;color:#222;letter-spacing:-0.350px;transform:scaleX(0.9478);transform-origin:0 50%;">Buyer</span>
<span class="t" style="left:1596.2px;top:1110px;font-size:17.8px;font-weight:400;color:#222;letter-spacing:-0.350px;transform:scaleX(0.9212);transform-origin:0 50%;">Referral N…</span>
<span class="t" style="left:1735.0px;top:1110px;font-size:17.8px;font-weight:400;color:#222;letter-spacing:-0.348px;">Qualified</span>
<span class="t" style="left:1872.8px;top:1110px;font-size:17.8px;font-weight:400;color:#222;letter-spacing:-0.154px;">3 mins ago</span>
<span class="t" style="left:829.2px;top:1175px;font-size:17.8px;font-weight:400;color:#4a90e2;letter-spacing:-0.408px;text-decoration:underline;text-underline-offset:1.6px;text-decoration-thickness:1.8px;">Bill Gardner</span>
<span class="t" style="left:1075.7px;top:1175px;font-size:17.8px;font-weight:400;color:#222;letter-spacing:-0.329px;">Bill_Gardner@gmail.com</span>
<span class="t" style="left:1320.3px;top:1175px;font-size:17.8px;font-weight:400;color:#222;letter-spacing:-0.430px;">846-153-0931</span>
<span class="t" style="left:1468.8px;top:1175px;font-size:17.8px;font-weight:400;color:#222;letter-spacing:-0.554px;">Seller</span>
<span class="t" style="left:1596.2px;top:1175px;font-size:17.8px;font-weight:400;color:#222;letter-spacing:-0.350px;transform:scaleX(0.9356);transform-origin:0 50%;">MyAgent…</span>
<span class="t" style="left:1735.0px;top:1175px;font-size:17.8px;font-weight:400;color:#222;letter-spacing:-0.348px;">Qualified</span>
<span class="t" style="left:1872.8px;top:1175px;font-size:17.8px;font-weight:400;color:#222;letter-spacing:-0.154px;">4 mins ago</span>
<span class="t" style="left:829.2px;top:1240px;font-size:17.8px;font-weight:400;color:#4a90e2;letter-spacing:-0.264px;text-decoration:underline;text-underline-offset:1.6px;text-decoration-thickness:1.8px;">Blayr Holt</span>
<span class="t" style="left:1075.7px;top:1240px;font-size:17.8px;font-weight:400;color:#222;letter-spacing:-0.257px;">B_Holt@gmail.com</span>
<span class="t" style="left:1320.3px;top:1240px;font-size:17.8px;font-weight:400;color:#222;letter-spacing:-0.430px;">007-939-2991</span>
<span class="t" style="left:1468.8px;top:1240px;font-size:17.8px;font-weight:400;color:#222;letter-spacing:-0.554px;">Seller</span>
<span class="t" style="left:1596.2px;top:1240px;font-size:17.8px;font-weight:400;color:#222;letter-spacing:-0.721px;">Redfin</span>
<span class="t" style="left:1735.0px;top:1240px;font-size:17.8px;font-weight:400;color:#222;letter-spacing:-0.598px;">Referred</span>
<span class="t" style="left:1872.8px;top:1240px;font-size:17.8px;font-weight:400;color:#222;letter-spacing:-0.154px;">4 mins ago</span>
<span class="t" style="left:829.2px;top:1305px;font-size:17.8px;font-weight:400;color:#9aa0ab;letter-spacing:-0.212px;text-decoration:underline;text-underline-offset:1.6px;text-decoration-thickness:1.3px;">Cory Austin</span>
<span class="t" style="left:1075.7px;top:1305px;font-size:17.8px;font-weight:400;color:#222;letter-spacing:-0.227px;">Cory28@gmail.com</span>
<span class="t" style="left:1320.3px;top:1305px;font-size:17.8px;font-weight:400;color:#222;letter-spacing:-0.430px;">566-544-5648</span>
<span class="t" style="left:1468.8px;top:1305px;font-size:17.8px;font-weight:400;color:#222;letter-spacing:-0.350px;transform:scaleX(0.9478);transform-origin:0 50%;">Buyer</span>
<span class="t" style="left:1596.2px;top:1305px;font-size:17.8px;font-weight:400;color:#222;letter-spacing:-0.350px;transform:scaleX(0.9212);transform-origin:0 50%;">Referral N…</span>
<span class="t" style="left:1735.0px;top:1305px;font-size:17.8px;font-weight:400;color:#222;letter-spacing:-0.348px;">Qualified</span>
<span class="t" style="left:1872.8px;top:1305px;font-size:17.8px;font-weight:400;color:#222;letter-spacing:-0.154px;">5 mins ago</span>
</div>

<!-- ===== caption overlay ===== -->
<div id="overlay"></div>
<span class="t" style="left:60.2px;top:1313px;font-size:29.5px;font-weight:400;color:#fff;letter-spacing:-0.142px;">Agentology multi-lead view referral engine</span>
</body>
</html>
